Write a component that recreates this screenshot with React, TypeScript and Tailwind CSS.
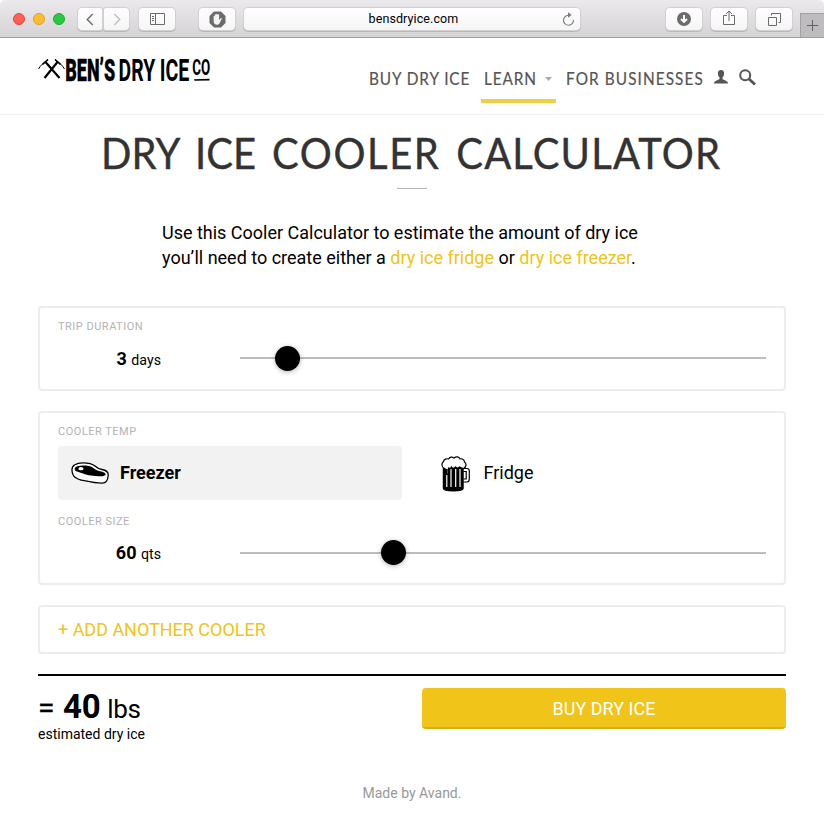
import { useState } from "react";
import type { ReactNode } from "react";
import { clsx } from "clsx";

function ToolbarButton({ className, children }: { className?: string; children: ReactNode }) {
  return (
    <div
      className={clsx(
        "flex h-[22px] items-center justify-center rounded-[4px] bg-gradient-to-b from-white to-[#f6f5f6] text-[#6b6b6b] shadow-[0_0_0_1px_#d2d0d2,0_1px_0_1px_#b9b7b9]",
        className
      )}
    >
      {children}
    </div>
  );
}

function BrowserChrome() {
  return (
    <div className="flex h-[38px] items-start rounded-t-[5px] border-b border-[#a09fa0] bg-gradient-to-b from-[#ebe9eb] to-[#d5d3d5]">
      <div className="ml-[13px] mt-[13px] flex gap-2">
        <span className="h-3 w-3 rounded-full border border-[#e2463f] bg-[#ff5f57]" />
        <span className="h-3 w-3 rounded-full border border-[#dfa023] bg-[#ffbd2e]" />
        <span className="h-3 w-3 rounded-full border border-[#1dad2b] bg-[#28c940]" />
      </div>
      <div className="ml-[13px] mt-2 flex gap-[2px]">
        <ToolbarButton className="w-[24px] rounded-r-[2px]">
          <svg width="8" height="13" viewBox="0 0 8 13" fill="none" stroke="currentColor" strokeWidth="1.4">
            <path d="M6.8 1 1.2 6.5 6.8 12" />
          </svg>
        </ToolbarButton>
        <ToolbarButton className="w-[25px] rounded-l-[2px]">
          <svg width="8" height="13" viewBox="0 0 8 13" fill="none" stroke="#bfbfbf" strokeWidth="1.4">
            <path d="M1.2 1 6.8 6.5 1.2 12" />
          </svg>
        </ToolbarButton>
      </div>
      <ToolbarButton className="ml-[10px] mt-2 w-9">
        <svg width="15" height="12" viewBox="0 0 15 12" fill="none" stroke="currentColor">
          <path d="M.5 .5h14v11H.5zM5.5 .5v11M2 3.5h2M2 5.5h2M2 7.5h2" />
        </svg>
      </ToolbarButton>
      <ToolbarButton className="ml-6 mt-2 w-9">
        <svg width="17" height="17" viewBox="0 0 17 17">
          <path d="M5 .5h7L16.500 5v7L12 16.500H5L.5 12V5z" fill="#6b6b6b" />
          <path
            d="M4.600 9.800V5.500c0-.9 1.200-.9 1.200 0V4c0-1 1.400-1 1.400 0v-.6c0-1 1.500-1 1.500 0V4c0-1 1.400-1 1.400 0v5l1.500-1.700c.6-.6 1.400-.2 1 .6L10.700 12c-.6 1.100-1.300 1.800-2.600 1.800-2.400 0-3.500-1.500-3.500-4z"
            fill="#f3f3f3"
          />
        </svg>
      </ToolbarButton>
      <ToolbarButton className="ml-[9px] mt-2 w-[336px]">
        <span className="ml-auto pl-[21px] font-['Roboto',sans-serif] text-[12.5px] tracking-[0.1px] text-black">
          bensdryice.com
        </span>
        <svg className="ml-auto mr-[5px]" width="13" height="14" viewBox="0 0 13 14" fill="none" stroke="#7b7b7b" strokeWidth="1.1">
          <path d="M7 3.200H6.300A5 5 0 1 0 11.500 8" />
          <path d="M6 .3 9.600 3 6 5.700z" fill="#7b7b7b" stroke="none" />
        </svg>
      </ToolbarButton>
      <ToolbarButton className="ml-[86px] mt-2 w-9">
        <svg width="14" height="14" viewBox="0 0 14 14">
          <circle cx="7" cy="7" r="7" fill="#6b6b6b" />
          <path d="M7 3v6.500M4 7l3 3 3-3" fill="none" stroke="#fff" strokeWidth="1.900" />
        </svg>
      </ToolbarButton>
      <ToolbarButton className="ml-[9px] mt-2 w-9">
        <svg className="-mt-[2px]" width="12" height="16" viewBox="0 0 12 16" fill="none" stroke="currentColor">
          <path d="M4 5.500H.5v9h11v-9H8M6 11V1M3 4l3-3 3 3" />
        </svg>
      </ToolbarButton>
      <ToolbarButton className="ml-[9px] mt-2 w-9">
        <svg width="13" height="13" viewBox="0 0 13 13" fill="none" stroke="currentColor">
          <path d="M.5 4.500h8v8h-8zM3.500 2.500v-2h9v9h-2" />
        </svg>
      </ToolbarButton>
      <div className="ml-auto mt-[13px] flex h-6 w-6 items-center justify-center border-l border-t border-[#a3a1a3] bg-[#bebcbe]">
        <svg width="11" height="11" viewBox="0 0 11 11" stroke="#626262">
          <path d="M5.500 0v11M0 5.500h11" />
        </svg>
      </div>
    </div>
  );
}

function Logo() {
  return (
    <svg
      className="overflow-visible text-black"
      width="176"
      height="42"
      viewBox="0 -8 176 42"
      fill="currentColor"
      fontFamily="Roboto, sans-serif"
    >
      <g fill="none" stroke="currentColor">
        <path d="M7.500 6 21.500 22M19.500 6 6.500 22" strokeWidth="2.200" />
        <path d="M.5 13C2.500 9.500 5 7 10 3.500M26.500 13C24.500 9.500 22 7 17 3.500" strokeWidth="1" />
        <path d="M4.500 8.500 10 3.500M22.500 8.500 17 3.500" strokeWidth="1.600" />
      </g>
      {/* condensed lettering */}
      <g transform="scale(0.58 1)">
        <text x="47" y="24.500" fontSize="32" fontWeight="900" textLength="86" lengthAdjust="spacingAndGlyphs" stroke="currentColor" strokeWidth="0.400">
          BEN’S
        </text>
        <text x="139" y="24.500" fontSize="32" fontWeight="700" textLength="63" lengthAdjust="spacingAndGlyphs">
          DRY
        </text>
        <text x="210" y="24.500" fontSize="32" fontWeight="700" textLength="51" lengthAdjust="spacingAndGlyphs">
          ICE
        </text>
        <text x="266" y="18.500" fontSize="22" fontWeight="700" textLength="31" lengthAdjust="spacingAndGlyphs">
          CO
        </text>
      </g>
      <path d="M156 23.300 171.500 22.700v1.700L156.500 24.800z" />
    </svg>
  );
}

function NavText({ className, children }: { className?: string; children: ReactNode }) {
  return <span className={clsx("inline-block origin-left scale-x-[0.93]", className)}>{children}</span>;
}

function SiteHeader() {
  return (
    <header className="flex h-[77px] items-start border-b border-[#f3f3f3] pl-[38px]">
      <div className="mt-[10px]">
        <Logo />
      </div>
      <nav className="ml-auto mr-[68px] mt-[25px] flex font-['Lato',sans-serif] text-[16.500px] leading-8 text-[#555] [-webkit-text-stroke:0.2px_#555]">
        <a className="w-[112px] whitespace-nowrap">
          <NavText className="tracking-[0.980px]">BUY DRY ICE</NavText>
        </a>
        <a className="flex h-[40px] w-[75px] items-start whitespace-nowrap border-b-4 border-[#f2ce44] pl-[3px]">
          <span className="w-[61px]">
            <NavText className="tracking-[0.950px]">LEARN</NavText>
          </span>
          <svg className="mt-[14px] shrink-0" width="7" height="4" viewBox="0 0 7 4" fill="#aaa">
            <path d="M0 0h7L3.500 4z" />
          </svg>
        </a>
        <a className="ml-[10px] w-[148px] whitespace-nowrap">
          <NavText className="tracking-[1.170px]">FOR BUSINESSES</NavText>
        </a>
        <svg className="mt-[7px]" width="14" height="14" viewBox="0 0 14 14" fill="#555">
          <path d="M7 0c2.200 0 3.300 1.500 3.100 3.700C9.900 5.500 9.300 6.500 8.500 7.300v1.600c1.500 1.300 5.500 1.500 5.500 4.600H0c0-3.100 4-3.300 5.500-4.600V7.300C4.700 6.500 4.100 5.500 3.900 3.700 3.700 1.500 4.800 0 7 0z" />
        </svg>
        <svg className="ml-[11px] mt-[6px]" width="17" height="17" viewBox="0 0 17 17" fill="none" stroke="#555">
          <circle cx="6.200" cy="6.200" r="5" strokeWidth="2" />
          <path d="m10 10 6 5.500" strokeWidth="2.800" />
        </svg>
      </nav>
    </header>
  );
}

function SteakIcon() {
  return (
    <svg width="38" height="22" viewBox="0 0 38 22">
      <path
        d="M1 8C.7 3.500 5 .8 12 .8c6 0 9.500 1 12 3.200 2 2 3.500 3 7 3.500 4.500.7 6.500 2.500 6.200 6-.3 4.500-2 7.500-6 7.700-5 .1-11-1-18-2.500C5 17 1 14.500 1 8z"
        fill="#fff"
        stroke="#000"
        strokeWidth="1.300"
      />
      <path
        d="M3.700 7c.3-2.600 4-3.500 9.300-3.500 5.500 0 8.500 1.500 11 3.700 3 2 7 1.900 9.500 3.500 2.500 1.800.8 3.500-3.500 3.500-8 0-13-.7-18-2.700C8 9.800 3.400 9.700 3.700 7z"
        fill="#000"
      />
      <ellipse cx="10" cy="6.700" rx="2.600" ry="1.600" fill="#fff" />
    </svg>
  );
}

function BeerIcon() {
  return (
    <svg className="mt-[2px]" width="30" height="37" viewBox="0 0 30 37">
      <path d="M2.500 10h19.500v22.500c0 3-19.500 3-19.500 0z" fill="#000" stroke="#000" strokeWidth="1.500" />
      <path
        d="M22.500 12.500h3.500c1.500 0 2.300 1 2.300 2.500v8c0 2-1 3-2.300 3h-3.500M22.500 15.500h2.700v7.500h-2.700"
        fill="none"
        stroke="#000"
        strokeWidth="1.200"
      />
      <path d="M5.800 19v12M10 13v18M14.700 13v18M19 13v18" stroke="#fff" strokeWidth="1.200" />
      <path
        d="M3.500 12.500C.5 11 .2 7.500 2.200 6 3 3 5.500 2.300 7.500 3c1.500-2.300 4-2.300 5.500-.8 2-2 5-1.500 6 .6 2.500-.3 4.200 1.200 4.500 3.200 2.500 1.800 1.500 5-.5 6-2 .8-3.500-.3-4.500-1-1.500 1.800-3 1-4 0-1.500 1.800-3 1.500-4 0-1 2-2.500 1.500-3 .5V18H6v-5c-.5 1-1.500.5-2.500-.5z"
        fill="#fff"
        stroke="#000"
        strokeWidth="1.200"
      />
    </svg>
  );
}

function Card({ className, children }: { className?: string; children: ReactNode }) {
  return <section className={clsx("rounded-[4px] border-2 border-[#ededed] px-[18px]", className)}>{children}</section>;
}

function Label({ children }: { children: ReactNode }) {
  return <div className="text-[11px] leading-4 tracking-[0.500px] text-[#b3b3b3]">{children}</div>;
}

function SliderRow({
  value,
  unit,
  percent,
  knob,
  text
}: {
  value: number;
  unit: string;
  percent: number;
  knob: string;
  text: string;
}) {
  return (
    <div className="flex h-[26px] items-center">
      <div className={clsx("flex w-[182px] items-baseline justify-end pr-[79px] text-[14.200px] leading-[26px]", text)}>
        <b className="mr-[4.500px] text-[18px]">{value}</b>
        {unit}
      </div>
      <div className="relative h-[2px] flex-1 bg-[#bdbdbd]">
        <span
          className={clsx("absolute h-[25px] w-[25px] rounded-full bg-black shadow-[0_1px_5px_rgba(0,0,0,0.3)]", knob)}
          style={{ left: `${percent}%` }}
        />
      </div>
    </div>
  );
}

const temps = [
  { name: "Freezer", icon: <SteakIcon /> },
  { name: "Fridge", icon: <BeerIcon /> }
];

export default function App() {
  const [temp, setTemp] = useState("Freezer");

  return (
    <div className="h-[824px] w-[824px] overflow-hidden bg-white font-['Roboto',sans-serif] text-black">
      <BrowserChrome />
      <SiteHeader />
      <main className="px-[38px]">
        <h1 className="ml-[63px] mt-[11px] flex origin-left scale-x-[0.93] whitespace-nowrap font-['Lato',sans-serif] text-[43px] leading-[54px] text-[#333] [-webkit-text-stroke:0.4px_#333]">
          <span className="w-[101px] tracking-[0.100px]">DRY</span>
          <span className="w-[83px] tracking-[0.100px]">ICE</span>
          <span className="w-[198px] tracking-[1.700px]">COOLER</span>
          <span className="tracking-[1.250px]">CALCULATOR</span>
        </h1>
        <div className="mx-auto mt-2 h-px w-[30px] bg-[#b5b5b5]" />
        <p className="mt-[31px] whitespace-nowrap pl-[124px] text-[18px] leading-[25px] tracking-[-0.005px]">
          Use this Cooler Calculator to estimate the amount of dry ice
          <br />
          you’ll need to create either a <a className="text-[#f0c419]">dry ice fridge</a> or{" "}
          <a className="text-[#f0c419]">dry ice freezer</a>.
        </p>

        <Card className="mt-9 h-[85px] pt-[11px]">
          <Label>TRIP DURATION</Label>
          <div className="mt-[10px]">
            <SliderRow value={3} unit="days" percent={6.650} knob="-top-[11px]" text="pt-[2px]" />
          </div>
        </Card>

        <Card className="mt-5 h-[174px] pt-[11px]">
          <Label>COOLER TEMP</Label>
          <div className="mt-[6px] flex gap-5">
            {temps.map((t) => (
              <button
                key={t.name}
                onClick={() => setTemp(t.name)}
                className={clsx(
                  "flex h-[54px] w-[344px] items-center rounded-[4px] text-[18px]",
                  t.name === "Freezer" ? "gap-[11px] pl-[13px]" : "gap-[13px] pl-[18.500px]",
                  temp === t.name && "bg-[#f2f2f2] font-bold"
                )}
              >
                {t.icon}
                <span className="-mt-[2px]">{t.name}</span>
              </button>
            ))}
          </div>
          <div className="mt-[14px]">
            <Label>COOLER SIZE</Label>
          </div>
          <div className="mt-[10px]">
            <SliderRow value={60} unit="qts" percent={26.800} knob="-top-3" text="pt-0" />
          </div>
        </Card>

        <Card className="mt-5 flex h-[49px] items-center">
          <a className="text-[18px] tracking-[-0.020px] text-[#f0c419]">+ ADD ANOTHER COOLER</a>
        </Card>

        <div className="mt-5 flex justify-between border-t-2 border-black pt-3">
          <div>
            <div className="flex h-[38px] items-baseline text-[26px] leading-[38px]">
              <span className="w-[25px] text-[30px] [-webkit-text-stroke:0.4px_#000]">=</span>
              <b className="mr-[7px] text-[33px] tracking-[-0.300px]">40</b>
              <span className="tracking-[-0.300px]">lbs</span>
            </div>
            <div className="text-[14px] leading-4">estimated dry ice</div>
          </div>
          <button className="h-[41px] w-[364px] rounded-[4px] border-b-2 border-[#d9b012] bg-[#f0c419] pt-[2px] text-[18px] text-white">
            BUY DRY ICE
          </button>
        </div>
        <footer className="mt-[41px] text-center text-[14px] leading-5 text-[#999]">Made by Avand.</footer>
      </main>
    </div>
  );
}
